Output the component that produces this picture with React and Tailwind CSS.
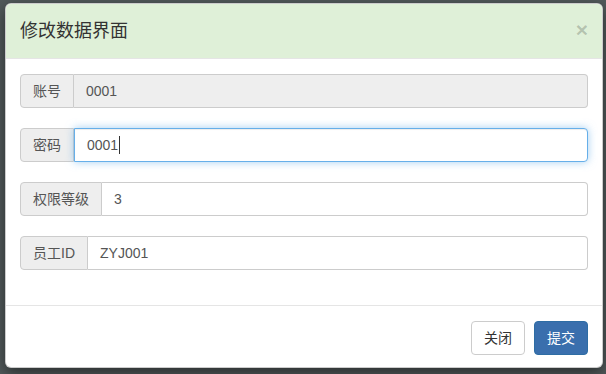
import React from 'react';

const font = { fontFamily: '"Liberation Sans", "Noto Sans CJK SC", sans-serif' };

const Row = ({ label, value, disabled, focused }) => (
  <div className="flex h-[34px] text-[14px] text-[#555]">
    <div className="flex items-center px-[12px] bg-[#eeeeee] border border-[#cccccc] rounded-l-[4px] shrink-0">
      {label}
    </div>
    <div
      className={
        'flex-1 flex items-center px-[12px] border rounded-r-[4px] ' +
        (disabled ? 'bg-[#eeeeee] border-[#cccccc] border-l-0 ' : 'bg-white ') +
        (focused
          ? 'border-[#66afe9] shadow-[inset_0_1px_1px_rgba(0,0,0,0.075),0_0_8px_rgba(102,175,233,0.6)]'
          : disabled
          ? ''
          : 'border-[#cccccc] border-l-0')
      }
    >
      <span>{value}</span>
      {focused && <span className="w-px h-[18px] bg-[#333] ml-px" />}
    </div>
  </div>
);

export default function App() {
  return (
    <div className="w-[606px] h-[374px] bg-[#525a5b] overflow-hidden pt-[3px] pl-[5px]" style={font}>
      <div className="w-[598px] h-[365px] bg-white rounded-[6px] border border-black/20 shadow-[0_5px_15px_rgba(0,0,0,0.5)] flex flex-col overflow-hidden">
        {/* Header */}
        <div className="h-[55px] bg-[#dff0d8] border-b border-[#e5e5e5] flex items-center justify-between pl-[14px] pr-[14px] shrink-0">
          <div className="text-[18px] text-[#333]">修改数据界面</div>
          <div className="text-[21px] font-bold text-black/20 leading-none -mt-[4px]">×</div>
        </div>

        {/* Body */}
        <div className="flex-1 px-[14px] pt-[15px] flex flex-col gap-[20px]">
          <Row label="账号" value="0001" disabled />
          <Row label="密码" value="0001" focused />
          <Row label="权限等级" value="3" />
          <Row label="员工ID" value="ZYJ001" />
        </div>

        {/* Footer */}
        <div className="h-[62px] border-t border-[#e5e5e5] flex justify-end items-start pt-[15px] pr-[14px] gap-[9px] shrink-0">
          <button className="w-[54px] h-[34px] bg-white border border-[#cccccc] rounded-[4px] text-[14px] text-[#333]">
            关闭
          </button>
          <button className="w-[54px] h-[34px] bg-[#3a6fad] border border-[#2e6da4] rounded-[4px] text-[14px] text-white">
            提交
          </button>
        </div>
      </div>
    </div>
  );
}
